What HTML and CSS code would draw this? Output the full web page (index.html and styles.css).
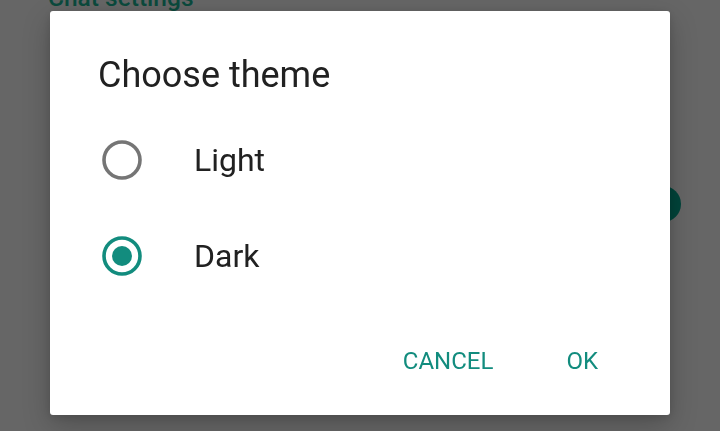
FILE: index.html
```html
<!DOCTYPE html>
<html lang="en">
<head>
<meta charset="utf-8">
<title>Choose theme</title>
<link rel="stylesheet" href="styles.css">
</head>
<body>
<div class="screen">
  <div class="section-title">Chat settings</div>
  <div class="setting-row">
    <span class="switch-knob"></span>
  </div>
</div>
<div class="scrim">
  <div class="dialog" role="dialog">
    <h1 class="dialog-title">Choose theme</h1>
    <div class="options">
      <label class="option">
        <svg class="radio" width="40" height="40" viewBox="0 0 40 40"><circle cx="20" cy="20" r="18" fill="none" stroke="#757575" stroke-width="3.6"/></svg>
        <span class="option-label">Light</span>
      </label>
      <label class="option">
        <svg class="radio" width="40" height="40" viewBox="0 0 40 40"><circle cx="20" cy="20" r="18" fill="none" stroke="#128c7e" stroke-width="3.6"/><circle cx="20" cy="20" r="10" fill="#128c7e"/></svg>
        <span class="option-label">Dark</span>
      </label>
    </div>
    <div class="actions">
      <button class="btn">CANCEL</button>
      <button class="btn">OK</button>
    </div>
  </div>
</div>
</body>
</html>
```
FILE: styles.css
```css
html, body {
  margin: 0;
  padding: 0;
}
body {
  width: 720px;
  height: 431px;
  overflow: hidden;
  background: #666666;
  font-family: Roboto, "Noto Sans", sans-serif;
}
.screen {
  display: flex;
  flex-direction: column;
  height: 431px;
}
.section-title {
  margin-top: -16px;
  padding-left: 48px;
  font-size: 24.5px;
  line-height: 28px;
  font-weight: 500;
  color: #0b4a3d;
}
.setting-row {
  margin-top: 174px;
  display: flex;
  justify-content: flex-end;
  padding-right: 39px;
  height: 36px;
}
.switch-knob {
  width: 36px;
  height: 36px;
  border-radius: 50%;
  background: #00443a;
}
.scrim {
  position: fixed;
  inset: 0;
  display: flex;
  justify-content: center;
  align-items: flex-start;
  padding-top: 11px;
}
.dialog {
  width: 620px;
  height: 404px;
  box-sizing: border-box;
  background: #ffffff;
  border-radius: 3px;
  padding: 44px 48px 30px 48px;
  display: flex;
  flex-direction: column;
  box-shadow: 0 10px 28px rgba(0, 0, 0, 0.22), 0 2px 10px rgba(0, 0, 0, 0.12);
}
.dialog-title {
  margin: 0;
  font-size: 36px;
  line-height: 40px;
  font-weight: 400;
  color: #212121;
}
.options {
  margin-top: 17px;
  display: flex;
  flex-direction: column;
}
.option {
  height: 96px;
  display: flex;
  align-items: center;
}
.radio {
  margin-left: 4px;
  flex: none;
}
.option-label {
  margin-left: 52px;
  font-size: 32px;
  line-height: 96px;
  color: #212121;
}
.actions {
  margin-top: 33px;
  display: flex;
  justify-content: flex-end;
  gap: 25px;
}
.btn {
  height: 48px;
  padding: 0 24px;
  border: none;
  background: none;
  font-family: Roboto, "Noto Sans", sans-serif;
  font-size: 24px;
  line-height: 48px;
  font-weight: 400;
  color: #128c7e;
}
```
